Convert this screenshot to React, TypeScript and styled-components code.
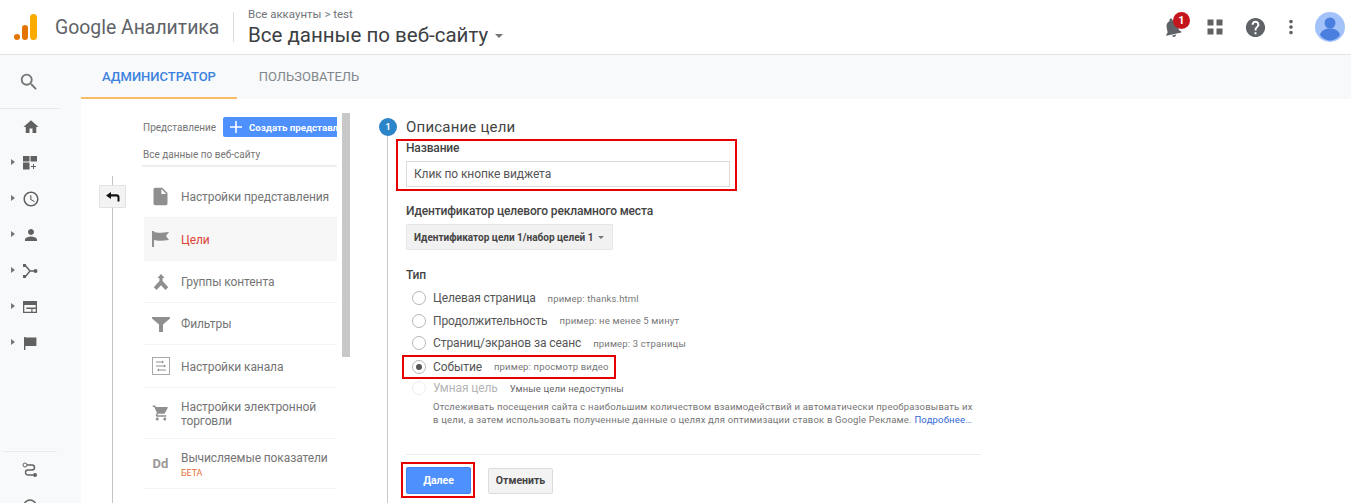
import React, { FC, ReactNode } from 'react';
import styled, { createGlobalStyle } from 'styled-components';
import {
  MdHelp,
  MdHome,
  MdInsertDriveFile,
  MdMoreVert,
  MdNotifications,
  MdOutlineAccessTime,
  MdPerson,
  MdSearch,
  MdShoppingCart,
} from 'react-icons/md';

const GlobalStyle = createGlobalStyle`
  html, body {
    margin: 0;
    height: 503px;
    overflow: hidden;
    background: #fff;
    font-family: Roboto, "Liberation Sans", sans-serif;
  }
  * { box-sizing: border-box; }
`;

const Page = styled.div`
  width: 1351px;
  height: 503px;
  display: flex;
  flex-direction: column;
  overflow: hidden;
`;

/* header */
const Header = styled.header`
  height: 55px;
  flex: none;
  display: flex;
  align-items: center;
  background: #fff;
  border-bottom: 1px solid #e3e4e5;
`;

const Logo = styled.svg`
  width: 24px;
  height: 28px;
  margin-left: 14px;
  flex: none;
`;

const Product = styled.div`
  margin-left: 17px;
  width: 178px;
  font-size: 19.4px;
  color: #5f6368;
  white-space: nowrap;
`;

const Crumbs = styled.div`
  height: 30px;
  border-left: 1px solid #dadce0;
  padding-left: 14px;
  display: flex;
  flex-direction: column;
  justify-content: center;
`;

const Trail = styled.div`
  font-size: 11.5px;
  line-height: 12px;
  color: #70757a;
`;

const ViewName = styled.div`
  margin-top: 3px;
  font-size: 20.5px;
  line-height: 24px;
  color: #3c4043;
  white-space: nowrap;
  display: flex;
  align-items: center;
`;

const Caret = styled.span`
  margin-left: 7px;
  margin-top: 2px;
  border-left: 4.5px solid transparent;
  border-right: 4.5px solid transparent;
  border-top: 4.5px solid #757575;
`;

const HeaderTools = styled.div`
  margin-left: auto;
  display: flex;
  align-items: center;
  padding-right: 3px;
`;

const Tool = styled.div<{ $w: number }>`
  width: ${p => p.$w}px;
  height: 30px;
  display: flex;
  align-items: center;
  justify-content: center;
  position: relative;
  color: #5f6368;
`;

const TiltedBell = styled(MdNotifications)`
  transform: rotate(-12deg);
`;

const Badge = styled.span`
  position: absolute;
  left: 19px;
  top: 0;
  width: 17px;
  height: 17px;
  border-radius: 50%;
  background: #c5161d;
  color: #fff;
  font-size: 11px;
  font-weight: 700;
  line-height: 17px;
  text-align: center;
`;

/* body */
const Main = styled.div`
  flex: 1;
  min-height: 0;
  display: flex;
`;

const Sidebar = styled.nav`
  width: 81px;
  flex: none;
  background: #f8f9fa;
  display: flex;
  flex-direction: column;
  overflow: hidden;
`;

const SearchRow = styled.div`
  height: 53px;
  flex: none;
  display: flex;
  align-items: center;
  padding-left: 18px;
  color: #757575;
`;

const SideRule = styled.div`
  width: 59px;
  height: 1px;
  flex: none;
  background: #e8e9ea;
`;

const SideItem = styled.div`
  height: 36px;
  flex: none;
  display: flex;
  align-items: center;
  position: relative;
  padding-left: 22px;
  color: #616161;
  & > svg { display: block; }
`;

const SideCaret = styled.span`
  position: absolute;
  left: 11px;
  top: 14px;
  border-top: 3.5px solid transparent;
  border-bottom: 3.5px solid transparent;
  border-left: 4px solid #757575;
`;

const SideBottom = styled.div`
  margin-top: 90px;
  flex: none;
`;

const SideRuleFaint = styled(SideRule)`
  margin-left: 3px;
  width: 54px;
  background: #e9eaeb;
`;

const Content = styled.div`
  flex: 1;
  min-width: 0;
  display: flex;
  flex-direction: column;
`;

const Tabs = styled.div`
  height: 44px;
  flex: none;
  display: flex;
  background: #f8f9fa;
`;

const Tab = styled.div<{ $active?: boolean }>`
  width: ${p => (p.$active ? 156 : 144)}px;
  display: flex;
  align-items: center;
  justify-content: center;
  font-size: 13px;
  font-weight: ${p => (p.$active ? 500 : 400)};
  color: ${p => (p.$active ? '#3b82e0' : '#80868b')};
  border-bottom: 2px solid ${p => (p.$active ? '#fbbc66' : 'transparent')};
`;

const Admin = styled.div`
  flex: 1;
  min-height: 0;
  display: flex;
  background: #fff;
  overflow: hidden;
`;

const Rail = styled.div`
  width: 62px;
  flex: none;
  position: relative;
  padding: 86px 0 0 18px;
  &::before {
    content: '';
    position: absolute;
    left: 31px;
    top: 77px;
    bottom: 0;
    width: 1px;
    background: #c4c4c4;
  }
`;

const BackButton = styled.div`
  position: relative;
  width: 27px;
  height: 23px;
  background: #f3f3f3;
  border: 1px solid #e2e2e2;
  border-radius: 1px;
  display: flex;
  align-items: center;
  justify-content: center;
`;

const NavPanel = styled.div`
  width: 194px;
  flex: none;
  padding-top: 18px;
`;

const NavHead = styled.div`
  display: flex;
  align-items: center;
  height: 20px;
  justify-content: space-between;
`;

const SmallLabel = styled.span`
  font-size: 10px;
  color: #757575;
  white-space: nowrap;
`;

const CreateButton = styled.div`
  width: 114px;
  height: 20px;
  background: #4d90fe;
  border-radius: 2px 0 0 2px;
  color: #fff;
  font-size: 9.7px;
  font-weight: 700;
  white-space: nowrap;
  overflow: hidden;
  display: flex;
  align-items: center;
  gap: 7px;
  padding-left: 7px;
  & > svg { flex: none; }
`;

const ViewLabel = styled.div`
  height: 30px;
  display: flex;
  align-items: center;
  padding-top: 6px;
  border-bottom: 2px solid #eeeeee;
  margin-left: -1px;
  padding-left: 1px;
`;

const NavList = styled.ul`
  margin: 9px 0 0;
  padding: 0;
  list-style: none;
`;

const NavItem = styled.li<{ $h: number; $active?: boolean }>`
  height: ${p => p.$h}px;
  margin-left: 1px;
  display: flex;
  align-items: center;
  background: ${p => (p.$active ? '#f7f7f7' : '#fff')};
  border-bottom: 1px solid #f4f4f4;
`;

const NavIcon = styled.div`
  width: 37px;
  flex: none;
  display: flex;
  justify-content: center;
  color: #8f8f8f;
  padding-right: 4px;
`;

const DdIcon = styled.span`
  font-size: 13px;
  font-weight: 700;
  color: #999;
`;

const NavText = styled.div<{ $active?: boolean }>`
  padding-top: 3px;
  font-size: 12px;
  line-height: 13.5px;
  letter-spacing: -0.1px;
  color: ${p => (p.$active ? '#db4437' : '#757575')};
`;

const Beta = styled.div`
  font-size: 9px;
  line-height: 10px;
  margin-top: 2px;
  color: #e8703a;
`;

const Scroll = styled.div`
  width: 8px;
  height: 244px;
  margin: 14px 0 0 5px;
  flex: none;
  background: #c8c8c8;
`;

const FormPane = styled.section`
  width: 640px;
  flex: none;
  margin-left: 29px;
  padding: 18px 0 0 27px;
  position: relative;
  &::before {
    content: '';
    position: absolute;
    left: 8px;
    top: 28px;
    bottom: 0;
    width: 1px;
    background: #c8c8c8;
  }
`;

const StepDot = styled.div`
  position: absolute;
  left: 0;
  top: 19px;
  width: 18px;
  height: 18px;
  border-radius: 50%;
  background: #2c84c9;
  color: #fff;
  font-size: 9px;
  font-weight: 700;
  line-height: 18px;
  text-align: center;
`;

const StepTitle = styled.div`
  font-size: 15px;
  line-height: 20px;
  letter-spacing: 0.2px;
  color: #444;
`;

const NameBox = styled.div`
  margin: 2px 0 0 -10px;
  width: 341px;
  height: 52px;
  border: 2px solid #e60000;
  padding: 0 0 0 8px;
`;

const FieldLabel = styled.div`
  font-size: 12px;
  line-height: 14px;
  font-weight: 500;
  letter-spacing: -0.15px;
  color: #444;
  white-space: nowrap;
`;

const TextField = styled.div`
  width: 324px;
  height: 26px;
  margin-top: 6px;
  border: 1px solid #dcdcdc;
  font-size: 12px;
  line-height: 24px;
  letter-spacing: -0.1px;
  padding-left: 7px;
  color: #555;
`;

const Section = styled.div<{ $top: number }>`
  margin-top: ${p => p.$top}px;
`;

const SelectBox = styled.div`
  width: 207px;
  height: 26px;
  margin-top: 6px;
  background: #f1f1f1;
  border: 1px solid #e6e6e6;
  border-radius: 1px;
  padding: 0 8px 0 7px;
  display: flex;
  align-items: center;
  justify-content: space-between;
  font-size: 10px;
  font-weight: 700;
  color: #444;
  white-space: nowrap;
`;

const SmallCaret = styled.span`
  border-left: 3.5px solid transparent;
  border-right: 3.5px solid transparent;
  border-top: 3.5px solid #777;
`;

const RadioList = styled.div`
  margin-top: 5px;
  margin-left: 6px;
`;

const RadioRow = styled.div<{ $highlight?: boolean }>`
  height: ${p => (p.$highlight ? 24 : 22.6)}px;
  display: flex;
  align-items: center;
  white-space: nowrap;
  ${p =>
    p.$highlight &&
    `
    width: 214px;
    margin-left: -10px;
    padding-left: 10px;
    margin-bottom: -2px;
    outline: 2px solid #e60000;
    outline-offset: -2px;
  `}
`;

const Radio = styled.span<{ $checked?: boolean; $disabled?: boolean }>`
  width: 14px;
  height: 14px;
  flex: none;
  border-radius: 50%;
  background: #fff;
  border: 1px solid ${p => (p.$disabled ? '#eeeeee' : '#b5b5b5')};
  display: flex;
  align-items: center;
  justify-content: center;
  &::after {
    content: '';
    width: 6px;
    height: 6px;
    border-radius: 50%;
    background: ${p => (p.$checked ? '#555' : 'transparent')};
  }
`;

const RadioText = styled.span<{ $disabled?: boolean }>`
  margin-left: 7px;
  font-size: 12px;
  letter-spacing: -0.1px;
  color: ${p => (p.$disabled ? '#b5b5b5' : '#555')};
`;

const Hint = styled.span<{ $dark?: boolean }>`
  margin-left: 12px;
  font-size: 9.5px;
  letter-spacing: 0.15px;
  color: ${p => (p.$dark ? '#666' : '#777')};
`;

const Description = styled.p`
  margin: 1px 0 0 27px;
  width: 552px;
  font-size: 9.5px;
  line-height: 13px;
  letter-spacing: 0.2px;
  color: #757575;
  white-space: nowrap;
  a {
    color: #3367d6;
    text-decoration: none;
  }
`;

const Rule = styled.div`
  margin-top: 28px;
  width: 575px;
  height: 1px;
  background: #ececec;
`;

const Actions = styled.div`
  margin-top: 7px;
  margin-left: -5px;
  display: flex;
  align-items: center;
`;

const PrimaryBox = styled.div`
  width: 74px;
  height: 36px;
  border: 2px solid #e60000;
  padding: 3px;
`;

const PrimaryButton = styled.div`
  width: 65px;
  height: 27px;
  background: #4d90fe;
  border: 1px solid #3f84f0;
  border-radius: 2px;
  color: #fff;
  font-size: 10.5px;
  font-weight: 700;
  line-height: 25px;
  text-align: center;
`;

const SecondaryButton = styled.div`
  width: 65px;
  height: 26px;
  margin: 2px 0 0 13px;
  background: #f3f3f3;
  border: 1px solid #dcdcdc;
  border-radius: 2px;
  color: #444;
  font-size: 10.5px;
  font-weight: 700;
  line-height: 24px;
  text-align: center;
`;

const Glyph: FC<{ size?: number; children: ReactNode }> = ({ size = 16, children }) => (
  <svg width={size} height={size} viewBox="0 0 16 16" fill="currentColor">
    {children}
  </svg>
);

const sideItems: { key: string; caret: boolean; icon: ReactNode }[] = [
  { key: 'home', caret: false, icon: <MdHome size={18} /> },
  {
    key: 'custom',
    caret: true,
    icon: (
      <Glyph>
        <rect x="1" y="1" width="6.5" height="5.5" />
        <rect x="8.5" y="1" width="6.5" height="5.5" />
        <rect x="1" y="7.5" width="6.5" height="7" />
        <path d="M11 9h1v2h2v1h-2v2h-1v-2H9v-1h2z" />
      </Glyph>
    ),
  },
  { key: 'time', caret: true, icon: <MdOutlineAccessTime size={18} /> },
  { key: 'person', caret: true, icon: <MdPerson size={18} /> },
  {
    key: 'acq',
    caret: true,
    icon: (
      <Glyph>
        <path d="M3 2l5 6H14M3 14l5-6" fill="none" stroke="currentColor" strokeWidth="1.4" />
        <rect x="1" y="1" width="3" height="3" />
        <rect x="1" y="12" width="3" height="3" />
        <circle cx="13.5" cy="8" r="2" />
      </Glyph>
    ),
  },
  {
    key: 'behaviour',
    caret: true,
    icon: (
      <Glyph>
        <path d="M1 2h14v12H1zM2.3 6v6.7h7V10h-5V8.5h9.4V6zm8.2 4v2.7h3.2V10z" fillRule="evenodd" />
      </Glyph>
    ),
  },
  {
    key: 'flag',
    caret: true,
    icon: (
      <Glyph>
        <path d="M2 2h1.4v13H2zM3.4 2.5h11v8.5h-11z" />
      </Glyph>
    ),
  },
];

const navItems: { label: ReactNode; h: number; active?: boolean; icon: ReactNode }[] = [
  { label: 'Настройки представления', h: 42, icon: <MdInsertDriveFile size={21} /> },
  {
    label: 'Цели',
    h: 43,
    active: true,
    icon: (
      <svg width="18" height="16" viewBox="0 0 18 16" fill="currentColor">
        <path d="M0 0h2v16H0zM2 1c3 1 7 1 15 0l-3 4 3 4c-6 1-12 1-15 0z" />
      </svg>
    ),
  },
  {
    label: 'Группы контента',
    h: 42,
    icon: (
      <svg width="16" height="16" viewBox="0 0 16 16" fill="currentColor">
        <path d="M8 0l3.6 4H9.6v3l5.6 6.2L12.4 16 8 11.2 3.6 16 .8 13.2 6.4 7V4H4.4z" />
      </svg>
    ),
  },
  {
    label: 'Фильтры',
    h: 42,
    icon: (
      <svg width="18" height="16" viewBox="0 0 18 16" fill="currentColor">
        <path d="M0 1h18v1.6L11 8.5V16H7V8.5L0 2.6z" />
      </svg>
    ),
  },
  {
    label: 'Настройки канала',
    h: 43,
    icon: (
      <svg width="18" height="18" viewBox="0 0 18 18" fill="none" stroke="#a8a8a8">
        <rect x="0.5" y="0.5" width="17" height="17" />
        <path d="M4 5h7M4 9h9M6 13h8" stroke="#8f8f8f" />
        <path d="M10 3.5L12 5l-2 1.5zM12 7.5L14 9l-2 1.5zM7 11.5L5 13l2 1.5z" fill="#8f8f8f" stroke="none" />
      </svg>
    ),
  },
  { label: <>Настройки электронной<br />торговли</>, h: 51, icon: <MdShoppingCart size={18} /> },
  {
    label: <>Вычисляемые показатели<Beta>БЕТА</Beta></>,
    h: 50,
    icon: <DdIcon>Dd</DdIcon>,
  },
];

const App: FC = () => (
  <Page>
    <GlobalStyle />
    <Header>
      <Logo viewBox="0 0 24 28">
        <circle cx="3" cy="24" r="3" fill="#e37400" />
        <rect x="8" y="12" width="6" height="15" rx="3" fill="#e37400" />
        <rect x="16" y="1" width="7" height="26" rx="3.5" fill="#f9ab00" />
      </Logo>
      <Product>Google Аналитика</Product>
      <Crumbs>
        <Trail>Все аккаунты &gt; test</Trail>
        <ViewName>
          Все данные по веб-сайту
          <Caret />
        </ViewName>
      </Crumbs>
      <HeaderTools>
        <Tool $w={36}>
          <TiltedBell size={23} />
          <Badge>1</Badge>
        </Tool>
        <Tool $w={50}>
          <svg width="16" height="16" viewBox="0 0 16 16" fill="#616161">
            <rect x="0.5" y="0.5" width="6" height="6" />
            <rect x="9.5" y="0.5" width="6" height="6" />
            <rect x="0.5" y="9.5" width="6" height="6" />
            <rect x="9.5" y="9.5" width="6" height="6" />
          </svg>
        </Tool>
        <Tool $w={30}>
          <MdHelp size={23} />
        </Tool>
        <Tool $w={42}>
          <MdMoreVert size={22} />
        </Tool>
        <Tool $w={36}>
          <svg width="30" height="30" viewBox="0 0 30 30">
            <circle cx="15" cy="15" r="15" fill="#a3c2fa" />
            <circle cx="15" cy="11" r="5.5" fill="#4a7fe0" />
            <path d="M5 23c1-5 6-6.5 10-6.5S24 18 25 23c-2 3-6 5.5-10 5.5S7 26 5 23z" fill="#4a7fe0" />
          </svg>
        </Tool>
      </HeaderTools>
    </Header>
    <Main>
      <Sidebar>
        <SearchRow>
          <MdSearch size={22} />
        </SearchRow>
        <SideRule />
        {sideItems.map(item => (
          <SideItem key={item.key}>
            {item.caret && <SideCaret />}
            {item.icon}
          </SideItem>
        ))}
        <SideBottom>
          <SideRuleFaint />
          <SideItem>
            <Glyph>
              <circle cx="3" cy="3" r="2" fill="none" stroke="currentColor" />
              <path d="M5 3h5a2.5 2.5 0 0 1 0 5H6a2.5 2.5 0 0 0 0 5h5" fill="none" stroke="currentColor" strokeWidth="1.4" />
              <circle cx="13" cy="13" r="2" />
            </Glyph>
          </SideItem>
          <SideItem>
            <Glyph>
              <circle cx="8" cy="8" r="6" fill="none" stroke="currentColor" strokeWidth="1.5" />
            </Glyph>
          </SideItem>
        </SideBottom>
      </Sidebar>
      <Content>
        <Tabs>
          <Tab $active>АДМИНИСТРАТОР</Tab>
          <Tab>ПОЛЬЗОВАТЕЛЬ</Tab>
        </Tabs>
        <Admin>
          <Rail>
            <BackButton>
              <svg width="14" height="10" viewBox="0 0 14 10" fill="#111">
                <path d="M0 3.5L5 0v2.3h5.5a3 3 0 0 1 3 3V9.5h-2V5.5a1 1 0 0 0-1-1H5V7z" />
              </svg>
            </BackButton>
          </Rail>
          <NavPanel>
            <NavHead>
              <SmallLabel>Представление</SmallLabel>
              <CreateButton>
                <svg width="12" height="12" viewBox="0 0 12 12" fill="#fff">
                  <path d="M5.2 0h1.6v5.2H12v1.6H6.8V12H5.2V6.8H0V5.2h5.2z" />
                </svg>
                Создать представление
              </CreateButton>
            </NavHead>
            <ViewLabel>
              <SmallLabel>Все данные по веб-сайту</SmallLabel>
            </ViewLabel>
            <NavList>
              {navItems.map((item, index) => (
                <NavItem key={index} $h={item.h} $active={item.active}>
                  <NavIcon>{item.icon}</NavIcon>
                  <NavText $active={item.active}>{item.label}</NavText>
                </NavItem>
              ))}
            </NavList>
          </NavPanel>
          <Scroll />
          <FormPane>
            <StepDot>1</StepDot>
            <StepTitle>Описание цели</StepTitle>
            <NameBox>
              <FieldLabel>Название</FieldLabel>
              <TextField>Клик по кнопке виджета</TextField>
            </NameBox>
            <Section $top={13}>
              <FieldLabel>Идентификатор целевого рекламного места</FieldLabel>
              <SelectBox>
                Идентификатор цели 1/набор целей 1
                <SmallCaret />
              </SelectBox>
            </Section>
            <Section $top={18}>
              <FieldLabel>Тип</FieldLabel>
              <RadioList>
                <RadioRow>
                  <Radio />
                  <RadioText>Целевая страница</RadioText>
                  <Hint>пример: thanks.html</Hint>
                </RadioRow>
                <RadioRow>
                  <Radio />
                  <RadioText>Продолжительность</RadioText>
                  <Hint>пример: не менее 5 минут</Hint>
                </RadioRow>
                <RadioRow>
                  <Radio />
                  <RadioText>Страниц/экранов за сеанс</RadioText>
                  <Hint>пример: 3 страницы</Hint>
                </RadioRow>
                <RadioRow $highlight>
                  <Radio $checked />
                  <RadioText>Событие</RadioText>
                  <Hint>пример: просмотр видео</Hint>
                </RadioRow>
                <RadioRow>
                  <Radio $disabled />
                  <RadioText $disabled>Умная цель</RadioText>
                  <Hint $dark>Умные цели недоступны</Hint>
                </RadioRow>
              </RadioList>
              <Description>
                Отслеживать посещения сайта с наибольшим количеством взаимодействий и автоматически преобразовывать их
                <br />
                в цели, а затем использовать полученные данные о целях для оптимизации ставок в Google Рекламе.{' '}
                <a href="#more">Подробнее…</a>
              </Description>
            </Section>
            <Rule />
            <Actions>
              <PrimaryBox>
                <PrimaryButton>Далее</PrimaryButton>
              </PrimaryBox>
              <SecondaryButton>Отменить</SecondaryButton>
            </Actions>
          </FormPane>
        </Admin>
      </Content>
    </Main>
  </Page>
);

export default App;
